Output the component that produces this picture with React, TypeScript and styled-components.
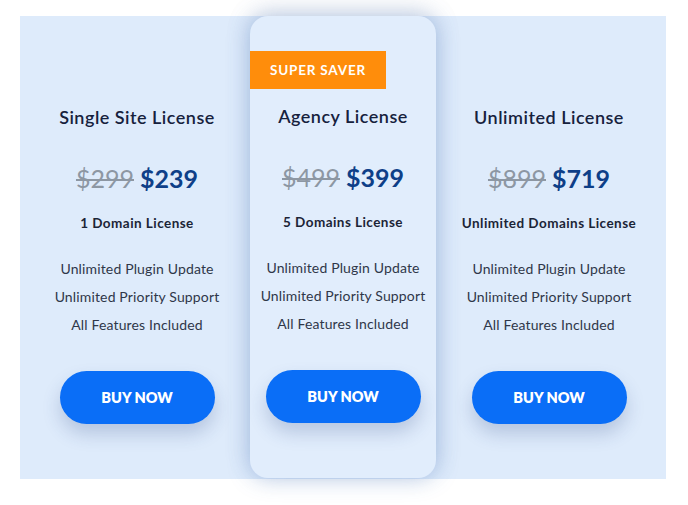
import React from "react";
import styled, { createGlobalStyle } from "styled-components";

const Global = createGlobalStyle`
  html, body { margin: 0; padding: 0; background: #ffffff; }
  body { font-family: Lato, "Open Sans", "Liberation Sans", sans-serif; }
  * { box-sizing: border-box; }
`;

const Page = styled.div`
  width: 688px;
  height: 505px;
  padding: 16px 22px 26px 20px;
  overflow: hidden;
`;

const Board = styled.div`
  display: grid;
  grid-template-columns: repeat(3, 206px);
  padding: 0 14px;
  height: 463px;
  background: #deebfb;
`;

const Column = styled.div<{ $featured?: boolean }>`
  display: flex;
  flex-direction: column;
  align-items: center;
  padding-top: ${(p) => (p.$featured ? "35px" : "89px")};
  ${(p) =>
    p.$featured &&
    `
    margin: 0 10px;
    background: #e1edfc;
    border-radius: 18px;
    height: 462px;
    position: relative;
    z-index: 1;
    box-shadow: 0 0 22px rgba(60, 110, 190, 0.34), 0 -6px 26px rgba(120, 130, 150, 0.14);
  `}
`;

const Badge = styled.div`
  align-self: flex-start;
  width: 136px;
  height: 38px;
  display: flex;
  align-items: center;
  justify-content: center;
  background: #ff8d0b;
  color: #ffffff;
  font-size: 13.5px;
  font-weight: 700;
  letter-spacing: 0.8px;
  margin-bottom: 15px;
`;

const Title = styled.h3`
  margin: 0;
  font-size: 18px;
  line-height: 24px;
  font-weight: 600;
  letter-spacing: 0.5px;
  color: #16213d;
`;

const Price = styled.div`
  margin-top: 33px;
  font-size: 25px;
  line-height: 32px;
  display: flex;
  gap: 6px;
`;

const OldPrice = styled.span`
  color: #8d97a3;
  text-decoration: line-through;
  text-decoration-thickness: 1.5px;
  font-weight: 400;
`;

const NewPrice = styled.span`
  color: #0e3f88;
  font-weight: 700;
`;

const Plan = styled.div`
  margin-top: 20px;
  font-size: 13.5px;
  line-height: 18px;
  font-weight: 700;
  letter-spacing: 0.45px;
  color: #1b2436;
`;

const Features = styled.ul`
  list-style: none;
  padding: 0;
  margin: 23px 0 0;
  text-align: center;
`;

const Feature = styled.li`
  font-size: 14px;
  line-height: 28px;
  letter-spacing: 0.15px;
  color: #2f3749;
`;

const BuyButton = styled.button`
  margin-top: 32px;
  width: 155px;
  height: 53px;
  border: none;
  border-radius: 27px;
  background: #0a6ef7;
  color: #ffffff;
  font-family: inherit;
  font-size: 14.5px;
  font-weight: 800;
  box-shadow: 0 10px 18px rgba(40, 70, 130, 0.22);
  cursor: pointer;
`;

type Plan = {
  title: string;
  old: string;
  price: string;
  plan: string;
  featured?: boolean;
};

const plans: Plan[] = [
  { title: "Single Site License", old: "$299", price: "$239", plan: "1 Domain License" },
  { title: "Agency License", old: "$499", price: "$399", plan: "5 Domains License", featured: true },
  { title: "Unlimited License", old: "$899", price: "$719", plan: "Unlimited Domains License" },
];

const features = ["Unlimited Plugin Update", "Unlimited Priority Support", "All Features Included"];

export default function App() {
  return (
    <>
      <Global />
      <Page>
        <Board>
          {plans.map((p) => (
            <Column key={p.title} $featured={p.featured}>
              {p.featured && <Badge>SUPER SAVER</Badge>}
              <Title>{p.title}</Title>
              <Price>
                <OldPrice>{p.old}</OldPrice>
                <NewPrice>{p.price}</NewPrice>
              </Price>
              <Plan>{p.plan}</Plan>
              <Features>
                {features.map((f) => (
                  <Feature key={f}>{f}</Feature>
                ))}
              </Features>
              <BuyButton>BUY NOW</BuyButton>
            </Column>
          ))}
        </Board>
      </Page>
    </>
  );
}
